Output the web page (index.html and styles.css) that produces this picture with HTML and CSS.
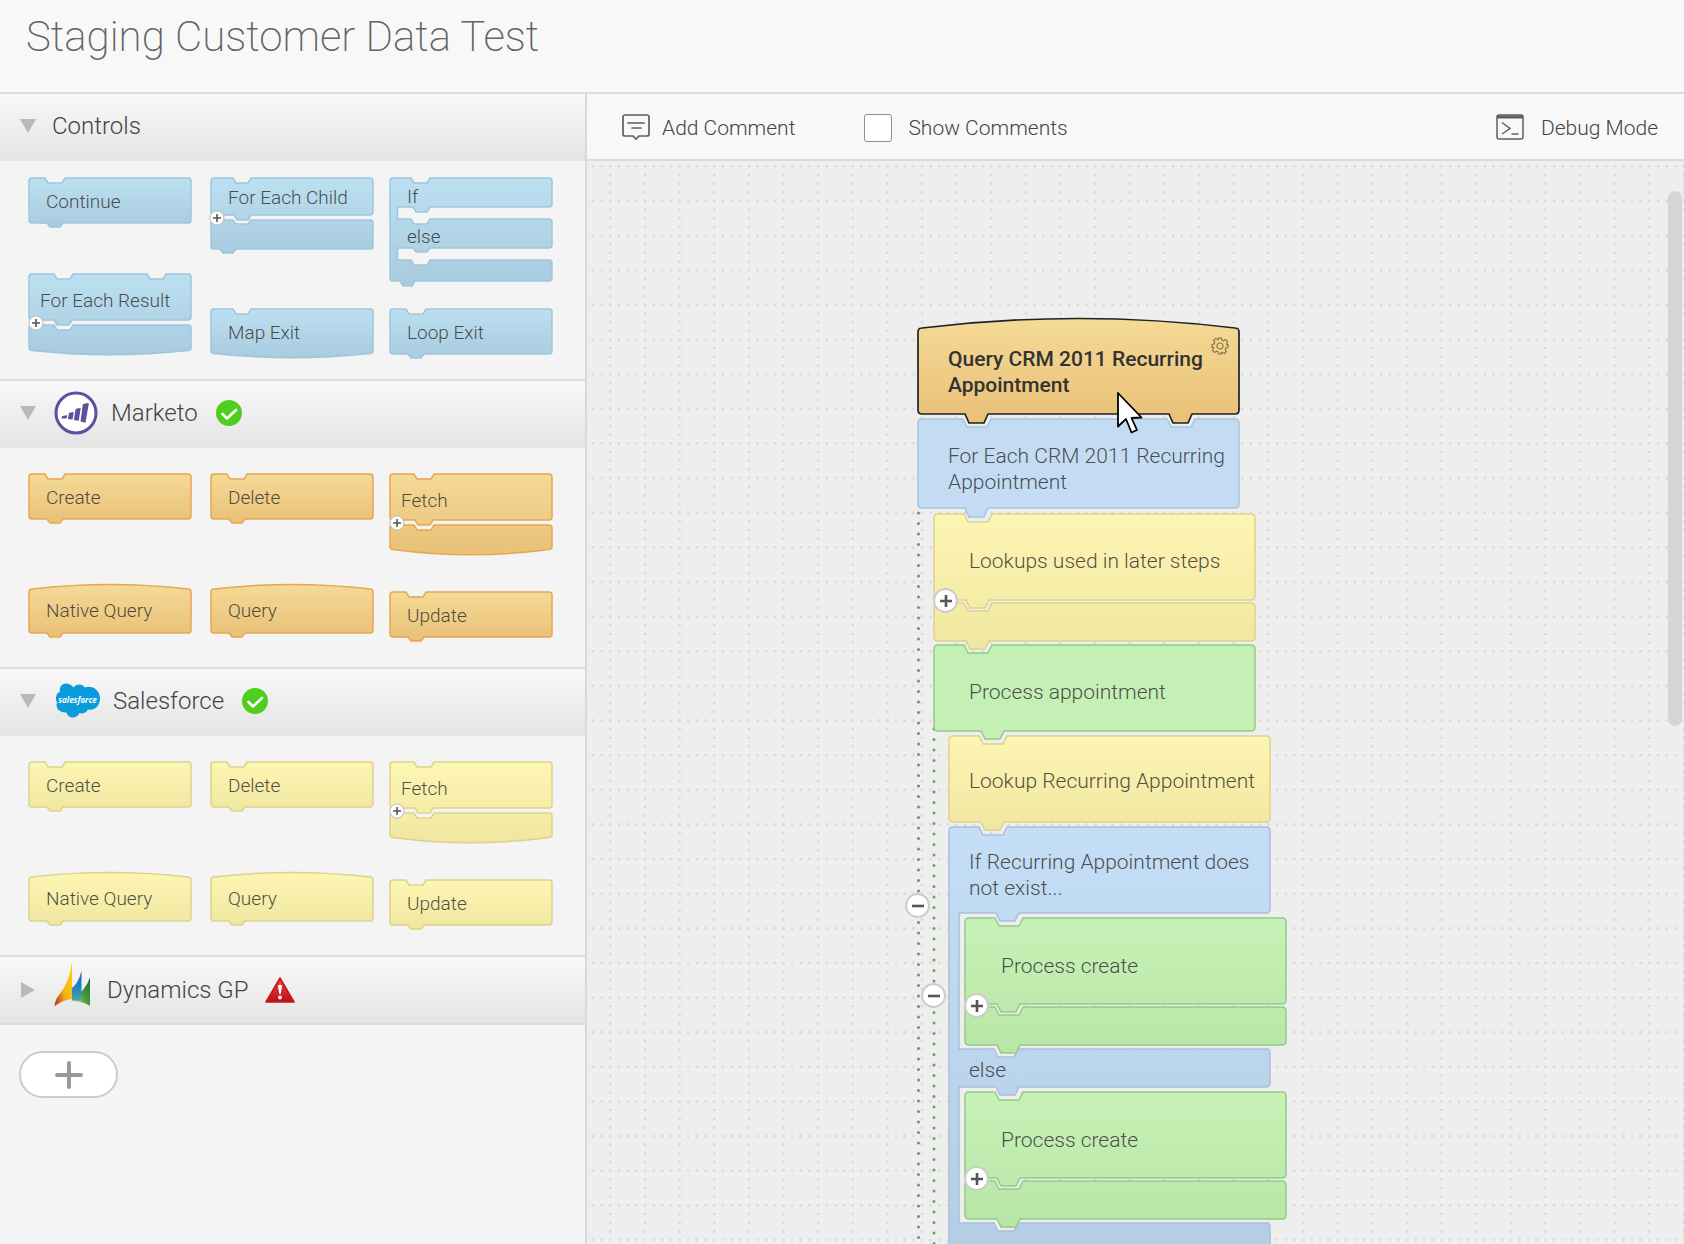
FILE: index.html
```html
<!DOCTYPE html>
<html lang="en">
<head>
<meta charset="utf-8">
<meta name="viewport" content="width=device-width, initial-scale=1">
<title>Staging Customer Data Test</title>
<link rel="stylesheet" href="styles.css">
</head>
<body>
<svg class="defs" aria-hidden="true">
  <defs>
    <linearGradient id="blue" x2="0" y2="1"><stop offset="0" stop-color="#bcdff1"/><stop offset="1" stop-color="#a8cbdf"/></linearGradient>
    <linearGradient id="orange" x2="0" y2="1"><stop offset="0" stop-color="#f5da97"/><stop offset="1" stop-color="#e9c076"/></linearGradient>
    <linearGradient id="yellow" x2="0" y2="1"><stop offset="0" stop-color="#fdf5b2"/><stop offset="1" stop-color="#efe7a1"/></linearGradient>
    <linearGradient id="green" x2="0" y2="1"><stop offset="0" stop-color="#c7f2b7"/><stop offset="1" stop-color="#b8e5a8"/></linearGradient>
    <linearGradient id="sky" x2="0" y2="1"><stop offset="0" stop-color="#c4def6"/><stop offset="1" stop-color="#b3cde5"/></linearGradient>
    <linearGradient id="sail1" x1=".9" y1=".3" x2="0" y2="1"><stop offset="0" stop-color="#fbc90f"/><stop offset=".45" stop-color="#f7b21a"/><stop offset="1" stop-color="#b5251c"/></linearGradient>
    <linearGradient id="sail2" x2="0" y2="1"><stop offset="0" stop-color="#1268b4"/><stop offset=".5" stop-color="#1b82c4"/><stop offset="1" stop-color="#4fa3a8"/></linearGradient>
    <linearGradient id="sail3" x1="1" x2="0" y2="1"><stop offset="0" stop-color="#1f7036"/><stop offset=".5" stop-color="#4b9a3c"/><stop offset="1" stop-color="#d5e8a8"/></linearGradient>
    <linearGradient id="alert" x2="0" y2="1"><stop offset="0" stop-color="#ec4a48"/><stop offset="1" stop-color="#b80f14"/></linearGradient>
    <pattern id="dots" width="32" height="32" patternUnits="userSpaceOnUse" patternTransform="translate(19 1) scale(1.0823)">
      <path d="M3 3h2v2h-2zM11 3h2v2h-2zM19 3h2v2h-2zM27 3h2v2h-2zM3 11h2v2h-2zM3 19h2v2h-2zM3 27h2v2h-2z" fill="#d4d4d4"/>
    </pattern>
    <symbol id="small-plus" viewBox="-10 -10 20 20" overflow="visible">
      <circle r="7" fill="#fff" stroke="#bbb" stroke-width="1"/>
      <path d="M-4 0H4M0 -4V4" stroke="#555" stroke-width="1.6"/>
    </symbol>
    <symbol id="action" overflow="visible">
      <path d="M3 0H16l3 5h14l3-5H159q3 0 3 3V42q0 3-3 3H34l-3 4H21l-3-4H3q-3 0-3-3V3q0-3 3-3Z"/>
    </symbol>
    <symbol id="exit" overflow="visible">
      <path d="M3 0H22l3 5h12l3-5H159q3 0 3 3V42q0 2-3 2.500Q81 53 3 44.500Q0 44 0 42V3q0-3 3-3Z"/>
    </symbol>
    <symbol id="query" overflow="visible">
      <path d="M3 5Q81 -4 159 5q3 0 3 3V46q0 3-3 3H34l-3 4H21l-3-4H3q-3 0-3-3V8q0-3 3-3Z"/>
    </symbol>
    <symbol id="loop" overflow="visible">
      <path d="M3 0H22l3 5h12l3-5H159q3 0 3 3V34q0 3-3 3H40l-3 5H26l-3-5H3q-3 0-3-3V3q0-3 3-3ZM3 42H22l3 4h12l3-4H159q3 0 3 3V68q0 3-3 3H25l-3 4H12l-3-4H3q-3 0-3-3V45q0-3 3-3Z"/>
      <use href="#small-plus" x="-4" y="30" width="20" height="20"/>
    </symbol>
    <symbol id="result" overflow="visible">
      <path d="M3 0H25l3 5h13l3-5H118l3 5h13l3-5H159q3 0 3 3V43q0 3-3 3H43l-3 5H28l-3-5H3q-3 0-3-3V3q0-3 3-3ZM3 51H25l3 5h13l3-5H159q3 0 3 3V74q0 2-3 2.500Q81 85 3 76.500Q0 76 0 74V54q0-3 3-3Z"/>
      <use href="#small-plus" x="-3" y="39" width="20" height="20"/>
    </symbol>
    <symbol id="fetch" overflow="visible">
      <path d="M3 0H24l3 5h14l3-5H159q3 0 3 3V43q0 3-3 3H43l-3 5H28l-3-5H3q-3 0-3-3V3q0-3 3-3ZM3 51H24l3 5h14l3-5H159q3 0 3 3V73q0 2-3 2.500Q81 86 3 75.500Q0 75 0 73V54q0-3 3-3Z"/>
      <use href="#small-plus" x="-3" y="39" width="20" height="20"/>
    </symbol>
    <symbol id="branch" overflow="visible">
      <path d="M3 0H21l3 5h13l3-5H159q3 0 3 3V26q0 3-3 3H40l-3 5H26l-3-5H7.500V41H21l3 5h13l3-5H159q3 0 3 3V67q0 3-3 3H40l-3 4H26l-3-4H7.500V82H21l3 5h13l3-5H159q3 0 3 3V100q0 3-3 3H25l-3 5H13l-3-5H3q-3 0-3-3V3q0-3 3-3Z"/>
    </symbol>
    <symbol id="check" viewBox="0 0 26 26">
      <circle cx="13" cy="13" r="13" fill="#4fcf1d"/>
      <path d="M6.500 14l4.500 4.500 9-8.500" fill="none" stroke="#fff" stroke-width="2.600" stroke-linecap="round" stroke-linejoin="round"/>
    </symbol>
  </defs>
</svg>

<header class="page-header"><h1>Staging Customer Data Test</h1></header>

<div class="workspace">
  <aside class="sidebar">
    <section>
      <h2 class="group-head"><svg class="caret" width="16" height="14"><path d="M0 0H16L8 14Z"/></svg>Controls</h2>
      <div class="palette palette-tight blue">
        <div class="column">
          <button class="block"><svg width="163" height="49"><use href="#action"/></svg><span class="label">Continue</span></button>
          <button class="block"><svg width="163" height="84"><use href="#result"/></svg><span class="label label-split">For Each Result</span></button>
        </div>
        <div class="column">
          <button class="block"><svg width="163" height="75"><use href="#loop"/></svg><span class="label label-high">For Each Child</span></button>
          <button class="block"><svg width="163" height="49"><use href="#exit"/></svg><span class="label">Map Exit</span></button>
        </div>
        <div class="column">
          <button class="block"><svg width="163" height="108"><use href="#branch"/></svg><span class="label label-branch"><span>If</span><span>else</span></span></button>
          <button class="block"><svg width="163" height="49"><use href="#action"/></svg><span class="label">Loop Exit</span></button>
        </div>
      </div>
    </section>

    <section>
      <h2 class="group-head ruled"><svg class="caret" width="16" height="14"><path d="M0 0H16L8 14Z"/></svg>
        <svg class="logo" width="44" height="44" viewBox="0 0 44 44"><circle cx="22" cy="22" r="20" fill="#fff" stroke="#5c4f9f" stroke-width="3"/><path d="M8.500 25l4.200-.8q.6 0 .5.600l-.7 2.700-5-.1.500-1.900q.1-.4.500-.5zM15.300 21.700l4-.8q.6 0 .5.600l-1.300 7-4.600-.6 1-5.700q0-.4.400-.5zM22 17.800l4.200-.9q.6 0 .5.600l-2 12.300-4.800-.9 1.700-10.600q0-.4.400-.5zM29.200 13l5-.9q.7 0 .6.600l-3.300 19-5-1.300 2.300-16.900q0-.4.400-.5z" fill="#5c4f9f"/></svg>
        <span>Marketo</span>
        <svg class="status" width="26" height="26" role="img" aria-label="Connected"><use href="#check"/></svg></h2>
      <div class="palette orange">
        <div class="column">
          <button class="block"><svg width="163" height="49"><use href="#action"/></svg><span class="label">Create</span></button>
          <button class="block"><svg width="163" height="57"><use href="#query"/></svg><span class="label label-low">Native Query</span></button>
        </div>
        <div class="column">
          <button class="block"><svg width="163" height="49"><use href="#action"/></svg><span class="label">Delete</span></button>
          <button class="block"><svg width="163" height="57"><use href="#query"/></svg><span class="label label-low">Query</span></button>
        </div>
        <div class="column">
          <button class="block"><svg width="163" height="81"><use href="#fetch"/></svg><span class="label label-split">Fetch</span></button>
          <button class="block"><svg width="163" height="49"><use href="#action"/></svg><span class="label">Update</span></button>
        </div>
      </div>
    </section>

    <section>
      <h2 class="group-head ruled"><svg class="caret" width="16" height="14"><path d="M0 0H16L8 14Z"/></svg>
        <svg class="logo" width="46" height="36" viewBox="-1 0 46 36"><path d="M18.500 4.500C21 1 27 0 30 4.500C37 2 45 7 45 15.500C45 24 38 28 33 26.500C31 30.500 27 31 24.500 30C22 36 13 36 11.500 29.500C5 30 0 25.500 2 19.500C-.5 14 2 9.500 5 9C3 1 13-3 18.500 4.500Z" fill="#0a9bdc"/><text x="22.500" y="19.500" text-anchor="middle" class="cloud-text">salesforce</text></svg>
        <span>Salesforce</span>
        <svg class="status" width="26" height="26" role="img" aria-label="Connected"><use href="#check"/></svg></h2>
      <div class="palette yellow">
        <div class="column">
          <button class="block"><svg width="163" height="49"><use href="#action"/></svg><span class="label">Create</span></button>
          <button class="block"><svg width="163" height="57"><use href="#query"/></svg><span class="label label-low">Native Query</span></button>
        </div>
        <div class="column">
          <button class="block"><svg width="163" height="49"><use href="#action"/></svg><span class="label">Delete</span></button>
          <button class="block"><svg width="163" height="57"><use href="#query"/></svg><span class="label label-low">Query</span></button>
        </div>
        <div class="column">
          <button class="block"><svg width="163" height="81"><use href="#fetch"/></svg><span class="label label-split">Fetch</span></button>
          <button class="block"><svg width="163" height="49"><use href="#action"/></svg><span class="label">Update</span></button>
        </div>
      </div>
    </section>

    <section>
      <h2 class="group-head ruled closed"><svg class="caret" width="16" height="16"><path d="M1 0L15 8L1 16Z"/></svg>
        <svg class="logo" width="40" height="56" viewBox="0 0 40 56"><path d="M36 15.500V44Q28 39 18 39V36Q31 30 36 15.500Z" fill="url(#sail3)"/><path d="M27.500 9V37Q23 39.500 18 38V26Q24 22 27.500 9Z" fill="url(#sail2)"/><path d="M18 .5V37Q9 38 .5 44Q1 38 5 33Q15 21 18 .5Z" fill="url(#sail1)"/></svg>
        <span>Dynamics GP</span>
        <svg class="status" width="30" height="26" viewBox="1 0 30 26" role="img" aria-label="Connection error"><path d="M15 1L29 25H1Z" fill="url(#alert)" stroke="#c3181c" stroke-width="1.500" stroke-linejoin="round"/><path d="M13 8.500q2-1.500 4 0l-1.200 8.500h-1.600z" fill="#fff"/><circle cx="15" cy="20.500" r="1.900" fill="#fff"/></svg></h2>
    </section>
    <button class="add-group" aria-label="Add connector"><svg width="28" height="28"><path d="M14 2V26M2 14H26" stroke="#999" stroke-width="4" stroke-linecap="round"/></svg></button>
  </aside>

  <main class="editor">
    <div class="toolbar">
      <button class="tool"><svg width="28" height="28" fill="none" stroke="#5f5f5f" stroke-width="1.700" stroke-linecap="round"><path d="M3 1H25q2 0 2 2V20q0 2-2 2H17l-3 3-3-3H3q-2 0-2-2V3q0-2 2-2Z"/><path d="M6 9H22M10 14H19"/></svg>Add Comment</button>
      <label class="tool tool-check"><input type="checkbox">Show Comments</label>
      <button class="tool tool-debug"><svg width="28" height="28" fill="none" stroke="#5f5f5f" stroke-width="1.500"><rect x="1" y="1" width="26" height="24" rx="2"/><path d="M1 3H27" stroke-width="3"/><path d="M6 8.500L14 14.500L6 20M15.500 20H22.500"/></svg>Debug Mode</button>
    </div>

    <div class="canvas">
      <svg class="canvas-grid" aria-hidden="true"><rect width="100%" height="100%" fill="url(#dots)"/></svg>
      <svg class="rails" aria-hidden="true" width="720" height="1083"><path class="rail-blue" d="M331.500 352V1083"/><path class="rail-green" d="M347 568V1083"/></svg>

      <div class="node node-query"><svg width="322" height="104" class="selected"><path d="M4 10Q160 -9 317 10q4 0 4 4V92q0 4-4 4H274l-4 9H255l-4-9H70l-4 9H51l-4-9H4q-4 0-4-4V14q0-4 4-4Z"/></svg>
        <span class="label label-strong">Query CRM 2011 Recurring<br>Appointment</span>
        <button class="gear" aria-label="Settings"><svg width="18" height="18" viewBox="-9 -9 18 18" fill="none" stroke="#8b7448" stroke-width="1.200" stroke-linejoin="round"><path d="M-1.500-8h3l.6 2.200 1.400.6 2-1.200 2.100 2.100-1.200 2 .6 1.300L8-1.500v3l-2.200.6-.6 1.400 1.200 2-2.100 2.100-2-1.200-1.300.6L1.500 8h-3l-.6-2.200-1.400-.6-2 1.200-2.100-2.100 1.200-2-.6-1.300L-8 1.500v-3l2.200-.6.6-1.400-1.200-2 2.100-2.100 2 1.200 1.300-.6Z"/><circle r="3"/></svg></button></div>

      <div class="node node-each"><svg width="322" height="98" class="sky-flat"><path d="M4 0H45l4 8H69l4-8H249l4 8H273l4-8H317q4 0 4 4V85q0 4-4 4H70l-4 9H51l-4-9H4q-4 0-4-4V4q0-4 4-4Z"/></svg>
        <span class="label label-double">For Each CRM 2011 Recurring<br>Appointment</span></div>

      <div class="node node-lookups"><svg width="322" height="135" class="yellow"><path d="M4 0H30l4 8H54l4-8H317q4 0 4 4V82q0 4-4 4H55l-4 8H36l-4-8H4q-4 0-4-4V4q0-4 4-4ZM4 89H30l4 8H54l4-8H317q4 0 4 4V123q0 4-4 4H55l-4 8H36l-4-8H4q-4 0-4-4V93q0-4 4-4Z"/></svg>
        <span class="label label-inset">Lookups used in later steps</span></div>

      <div class="node node-process"><svg width="322" height="94" class="green-flat"><path d="M4 0H30l4 8H54l4-8H317q4 0 4 4V82q0 4-4 4H70l-4 8H51l-4-8H4q-4 0-4-4V4q0-4 4-4Z"/></svg>
        <span class="label label-inset">Process appointment</span></div>

      <div class="node node-recurring"><svg width="322" height="94" class="yellow"><path d="M4 0H30l4 8H54l4-8H317q4 0 4 4V82q0 4-4 4H55l-4 8H36l-4-8H4q-4 0-4-4V4q0-4 4-4Z"/></svg>
        <span class="label label-nested">Lookup Recurring Appointment</span></div>

      <div class="node node-if"><svg width="322" height="440" class="sky"><path d="M4 0H30l4 8H54l4-8H317q4 0 4 4V82q0 4-4 4H70l-4 8H51l-4-8H10V222H45l4 8H65l4-8H317q4 0 4 4V256q0 4-4 4H70l-4 8H51l-4-8H10V396H45l4 8H65l4-8H317q4 0 4 4V436q0 4-4 4H4q-4 0-4-4V4q0-4 4-4Z"/></svg>
        <span class="label label-if">If Recurring Appointment does<br>not exist...</span></div>
      <span class="label label-else">else</span>

      <div class="node node-create"><svg width="322" height="135" class="green"><path d="M4 0H30l4 8H54l4-8H317q4 0 4 4V82q0 4-4 4H55l-4 8H36l-4-8H4q-4 0-4-4V4q0-4 4-4ZM4 89H30l4 8H54l4-8H317q4 0 4 4V123q0 4-4 4H55l-4 8H36l-4-8H4q-4 0-4-4V93q0-4 4-4Z"/></svg>
        <span class="label label-create">Process create</span></div>
      <div class="node node-create-else"><svg width="322" height="135" class="green"><path d="M4 0H30l4 8H54l4-8H317q4 0 4 4V82q0 4-4 4H55l-4 8H36l-4-8H4q-4 0-4-4V4q0-4 4-4ZM4 89H30l4 8H54l4-8H317q4 0 4 4V123q0 4-4 4H55l-4 8H36l-4-8H4q-4 0-4-4V93q0-4 4-4Z"/></svg>
        <span class="label label-create">Process create</span></div>

      <button class="knob knob-lookups" aria-label="Expand"><svg width="14" height="14"><path d="M1 7H13M7 1V13"/></svg></button>
      <button class="knob knob-create" aria-label="Expand"><svg width="14" height="14"><path d="M1 7H13M7 1V13"/></svg></button>
      <button class="knob knob-create-else" aria-label="Expand"><svg width="14" height="14"><path d="M1 7H13M7 1V13"/></svg></button>
      <button class="knob knob-outer" aria-label="Collapse"><svg width="14" height="14"><path d="M1 7H13"/></svg></button>
      <button class="knob knob-inner" aria-label="Collapse"><svg width="14" height="14"><path d="M1 7H13"/></svg></button>

      <svg class="pointer" aria-hidden="true" width="26" height="42" viewBox="-1 -1 26 42"><path d="M0 0V33.500L8 26L13.500 39.500L19 37L13.500 25L23.500 24.500Z" fill="#fff" stroke="#000" stroke-width="1.800" stroke-linejoin="round"/></svg>
      <div class="scroll-thumb"></div>
    </div>
  </main>
</div>
</body>
</html>
```
FILE: styles.css
```css
* { box-sizing: border-box; }

body {
  margin: 0;
  height: 100vh;
  display: flex;
  flex-direction: column;
  overflow: hidden;
  background: #f8f8f8;
  color: #444;
  font-family: Roboto, "Liberation Sans", sans-serif;
  font-weight: 300;
}

button {
  margin: 0;
  padding: 0;
  border: 0;
  background: none;
  color: inherit;
  font: inherit;
  text-align: left;
}

svg { display: block; flex: none; overflow: visible; }
.defs { position: absolute; width: 0; height: 0; }

.page-header {
  padding: 13px 26px 31px;
  border-bottom: 2px solid #dbdbdb;
}
.page-header h1 {
  margin: 0;
  font-size: 42px;
  line-height: 48px;
  font-weight: 200;
  color: #636363;
}

.workspace { flex: 1; min-height: 0; display: flex; }

/* Sidebar */
.sidebar {
  flex: none;
  width: 587px;
  border-right: 2px solid #d9d9d9;
  background: #f4f4f4;
  overflow: hidden;
}
.group-head {
  display: flex;
  align-items: center;
  height: 67px;
  margin: 0;
  padding: 0 20px 3px;
  background: linear-gradient(#f8f8f8, #e4e4e4);
  background-clip: padding-box;
  font-size: 24px;
  line-height: 30px;
  font-weight: 300;
}
.ruled { height: 69px; border-top: 2px solid #dcdcdc; }
.closed { height: 70px; padding-bottom: 0; border-bottom: 2px solid #dcdcdc; }
.caret { margin-right: 16px; fill: #b9b9b9; }
.logo { margin: 0 13px 0 2px; }
.status { margin-left: 18px; }
.cloud-text { font: italic 700 8px "Open Sans", sans-serif; fill: #fff; }

.palette {
  display: grid;
  grid-template-columns: 182px 179px 163px;
  padding: 26px 29px;
}
.column {
  display: flex;
  flex-direction: column;
  justify-content: space-between;
  align-items: flex-start;
  gap: 37px;
}
.palette-tight { padding: 17px 29px 21px; }
.palette-tight .column { gap: 23px; }

.block { display: grid; }
.block > * { grid-area: 1 / 1; }

.label { position: relative; font-size: 21px; line-height: 26px; color: #333d; }
.block .label { padding: 12px 0 0 17px; font-size: 19px; line-height: 24px; }
.block .label-high { padding-top: 8px; }
.block .label-low { padding-top: 15px; }
.block .label-split { padding: 15px 0 0 11px; }
.block .label-branch { display: flex; flex-direction: column; gap: 16px; padding-top: 7px; }

.blue { fill: url(#blue); stroke: #9ec6da; stroke-width: 1.5; }
.orange { fill: url(#orange); stroke: #e7a750; stroke-width: 1.5; }
.yellow { fill: url(#yellow); stroke: #dbd38d; stroke-width: 1.5; }
.green { fill: url(#green); stroke: #93cc85; stroke-width: 1.5; }
.green-flat { fill: #c5f0b5; stroke: #93cc85; stroke-width: 1.5; }
.sky { fill: url(#sky); stroke: #aabfda; stroke-width: 1.5; }
.sky-flat { fill: #c3dcf4; stroke: #a2c7dc; stroke-width: 1.5; }
.selected { fill: url(#orange); stroke: #1d2226; stroke-width: 1.7; }

.add-group {
  display: flex;
  align-items: center;
  justify-content: center;
  width: 99px;
  height: 47px;
  margin: 26px 19px;
  border: 2px solid #ccc;
  border-radius: 24px;
  background: #fff;
}

/* Editor */
.editor { flex: 1; min-width: 0; display: flex; flex-direction: column; }
.toolbar {
  display: flex;
  align-items: center;
  height: 67px;
  padding: 2px 26px 0 35px;
  border-bottom: 2px solid #dbdbdb;
}
.tool {
  display: flex;
  align-items: center;
  gap: 12px;
  font-size: 21px;
  line-height: 26px;
}
.tool-check { gap: 16px; margin-left: 69px; }
.tool-debug { gap: 17px; margin-left: auto; }
.tool-check input {
  appearance: none;
  width: 28px;
  height: 28px;
  margin: 0;
  border: 1px solid #8f8f8f;
  border-radius: 3px;
  background: #fff;
}

.canvas {
  position: relative;
  flex: 1;
  min-height: 0;
  overflow: hidden;
  background: #eee;
}
.canvas-grid { position: absolute; inset: 0; width: 100%; height: 100%; }
.rails { position: absolute; left: 0; top: 0; fill: none; stroke-width: 3; stroke-linecap: round; stroke-dasharray: 0 10.5; }
.rail-blue { stroke: #6e88a6; }
.rail-green { stroke: #5cab4c; }

.node { position: absolute; display: grid; }
.node > * { grid-area: 1 / 1; }
.node-query { left: 331px; top: 157px; }
.node-each { left: 331px; top: 258px; }
.node-lookups { left: 347px; top: 353px; }
.node-process { left: 347px; top: 484px; }
.node-recurring { left: 362px; top: 575px; }
.node-if { left: 362px; top: 666px; }
.node-create { left: 378px; top: 757px; }
.node-create-else { left: 378px; top: 931px; }

.label-strong { padding: 28px 0 0 30px; font-weight: 500; color: #333; }
.label-double { padding: 24px 0 0 30px; }
.label-inset { padding: 34px 0 0 35px; }
.label-create { padding: 35px 0 0 36px; }
.label-nested { padding: 32px 0 0 20px; }
.label-if { padding: 22px 0 0 20px; }
.label-else { position: absolute; left: 382px; top: 896px; }

.gear { position: absolute; right: 11px; top: 19px; }

.knob {
  position: absolute;
  display: flex;
  align-items: center;
  justify-content: center;
  width: 25px;
  height: 25px;
  border: 2px solid #ccc;
  border-radius: 50%;
  background: #fff;
}
.knob path { stroke: #555; stroke-width: 2.6; }
.knob-lookups { left: 346px; top: 427px; }
.knob-create { left: 377px; top: 832px; }
.knob-create-else { left: 377px; top: 1005px; }
.knob-outer { left: 318px; top: 732px; }
.knob-inner { left: 334px; top: 822px; }

.pointer { position: absolute; left: 530px; top: 231px; }
.scroll-thumb {
  position: absolute;
  right: 2px;
  top: 30px;
  width: 14px;
  height: 535px;
  border-radius: 7px;
  background: #d5d5d5;
}
```
